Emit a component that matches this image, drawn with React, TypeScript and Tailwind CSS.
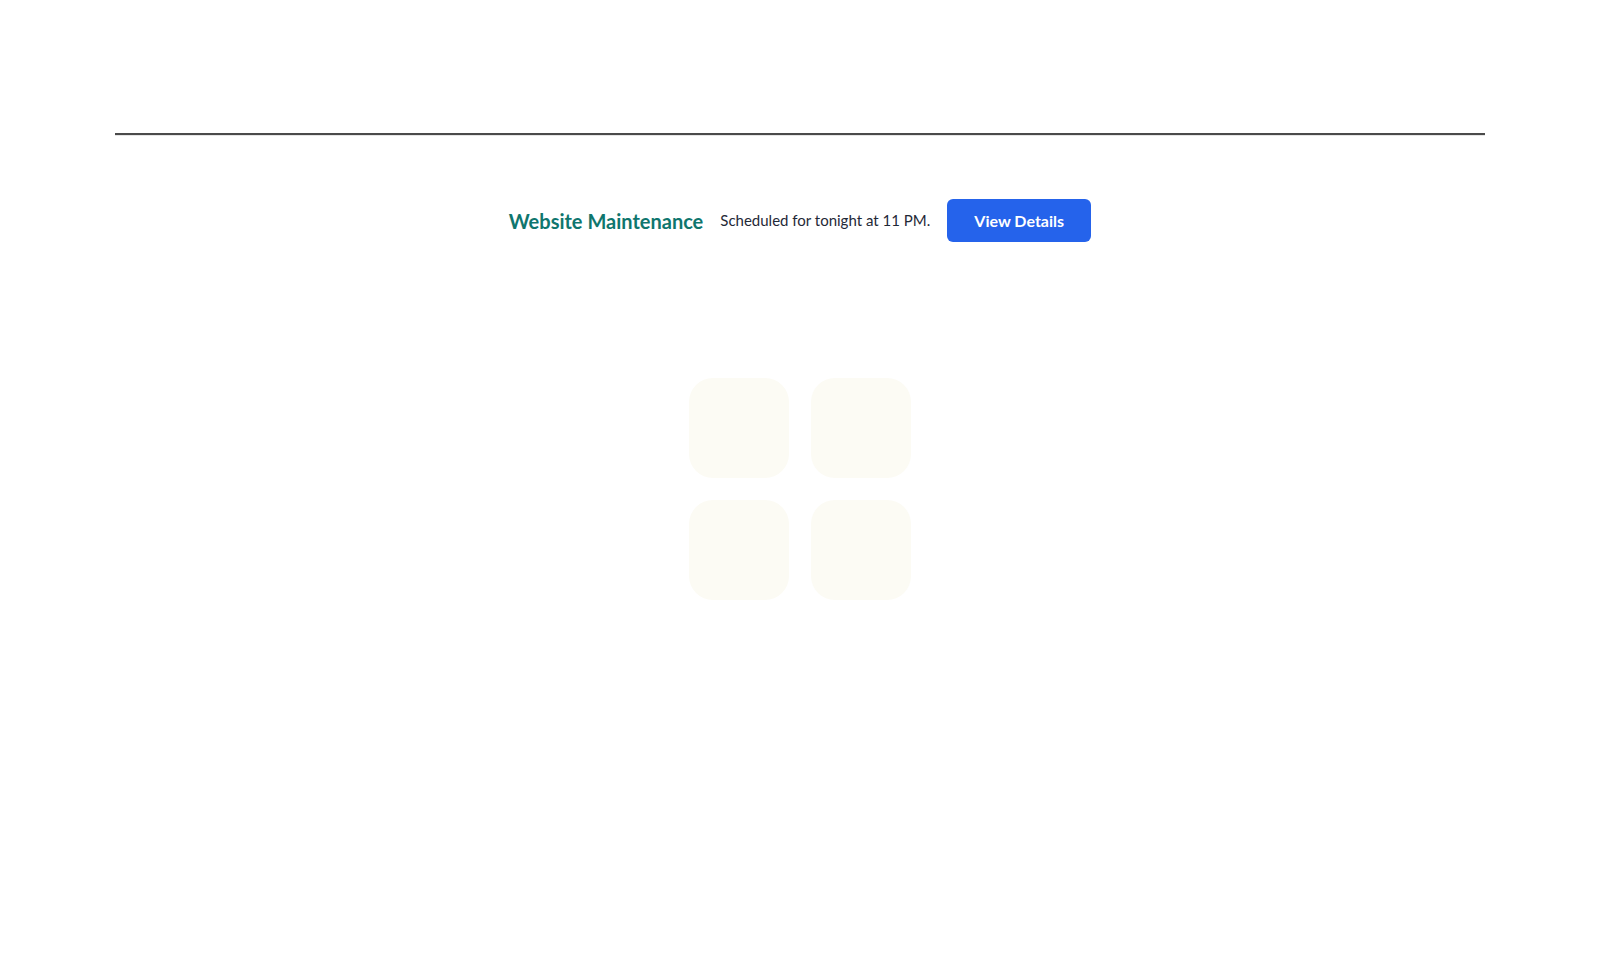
import React from "react";

const Tile = () => <div className="h-[100px] w-[100px] rounded-3xl bg-[#fcfbf4]" />;

const App = () => {
  return (
    <div
      className="min-h-screen bg-white pt-[133px]"
      style={{ fontFamily: "Lato, 'Noto Sans', sans-serif" }}
    >
      <hr className="mx-[115px] border-t-2 border-b border-t-[#4a4a4a] border-b-[#e5e5e5]" />

      <div className="mt-[63px] flex items-center justify-center gap-[17px]">
        <h2 className="text-[20px] font-bold text-[#0f766e]">Website Maintenance</h2>
        <p className="text-[15px] text-[#1f2937]">Scheduled for tonight at 11 PM.</p>
        <button
          type="button"
          className="h-[43px] w-[144px] rounded-md bg-[#2563eb] text-[16px] font-bold text-white"
        >
          View Details
        </button>
      </div>

      <div className="mt-[136px] flex justify-center">
        <div className="grid grid-cols-2 gap-[22px]">
          <Tile />
          <Tile />
          <Tile />
          <Tile />
        </div>
      </div>
    </div>
  );
};

export default App;
